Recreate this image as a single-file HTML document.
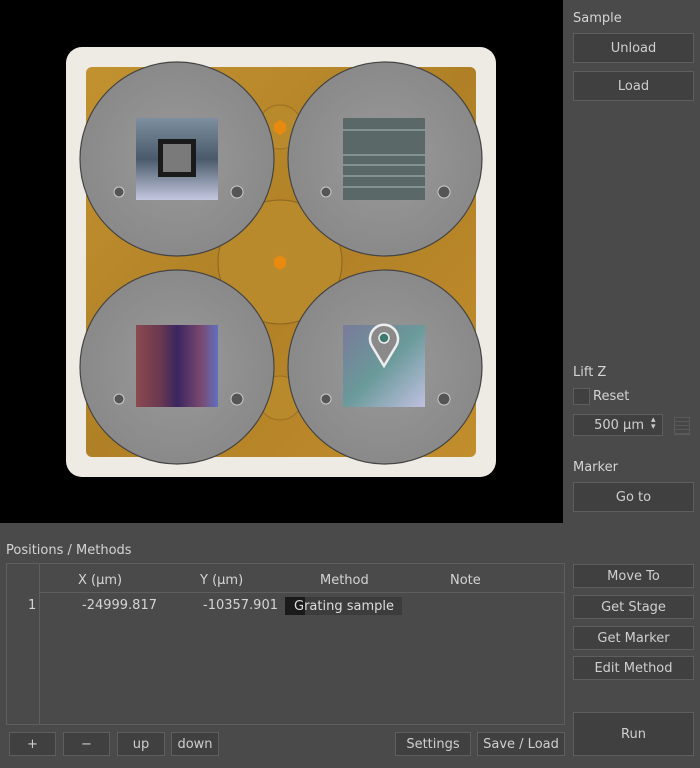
<!DOCTYPE html>
<html><head><style>
body{margin:0;width:700px;height:768px;background:#4a4a4a;font-family:"DejaVu Sans","Liberation Sans",sans-serif;color:#d2d2d2;font-size:13px;position:relative;overflow:hidden}
.a{position:absolute}
.btn{position:absolute;box-sizing:border-box;border:1px solid #5e5e5e;background:#404040;color:#cfcfcf;text-align:center;font-size:13px}
.lbl{position:absolute;font-size:13px;color:#d4d4d4}
</style></head><body>
<div class="a" style="left:0;top:0;width:563px;height:523px;background:#000"></div>
<svg class="a" style="left:0;top:0" width="563" height="523">
<defs>
<radialGradient id="g" cx="50%" cy="50%" r="60%"><stop offset="0" stop-color="#9a9a9a"/><stop offset="1" stop-color="#868686"/></radialGradient>
<linearGradient id="gold" x1="0" y1="0" x2="1" y2="1"><stop offset="0" stop-color="#c29230"/><stop offset=".5" stop-color="#b08026"/><stop offset="1" stop-color="#c28e2c"/></linearGradient>
<linearGradient id="s1" x1="0" y1="0" x2="0" y2="1"><stop offset="0" stop-color="#7d8fa0"/><stop offset=".5" stop-color="#4a5a6a"/><stop offset="1" stop-color="#c5c8e0"/></linearGradient>
<linearGradient id="s3" x1="0" y1="0" x2="1" y2="0"><stop offset="0" stop-color="#8a4a50"/><stop offset=".3" stop-color="#6a3850"/><stop offset=".5" stop-color="#3a2560"/><stop offset=".8" stop-color="#7a4a70"/><stop offset="1" stop-color="#6070c0"/></linearGradient>
<linearGradient id="s4" x1="0" y1="0" x2="1" y2="1"><stop offset="0" stop-color="#7a7a9a"/><stop offset=".5" stop-color="#6a9a9a"/><stop offset="1" stop-color="#c0c0e0"/></linearGradient>
</defs>
<rect x="66" y="47" width="430" height="430" rx="16" fill="#eeeae4"/>
<rect x="86" y="67" width="390" height="390" rx="6" fill="url(#gold)"/>
<circle cx="280" cy="262" r="62" fill="#b88a2c" stroke="#8a6420"/>
<circle cx="280" cy="127" r="22" fill="#b88a2c" stroke="#9a7024"/>
<circle cx="280" cy="398" r="22" fill="#b88a2c" stroke="#9a7024"/>
<polygon points="280,120 286,124 286,131 280,135 274,131 274,124" fill="#e88a10"/>
<polygon points="280,255 286,259 286,266 280,270 274,266 274,259" fill="#e88a10"/>
<g stroke="#444" stroke-width="1.2" fill="url(#g)">
<circle cx="177" cy="159" r="97"/><circle cx="385" cy="159" r="97"/>
<circle cx="177" cy="367" r="97"/><circle cx="385" cy="367" r="97"/>
</g>
<rect x="136" y="118" width="82" height="82" fill="url(#s1)"/>
<rect x="158" y="139" width="38" height="38" fill="#1a1a1a"/><rect x="163" y="144" width="28" height="28" fill="#7a7a7a"/>
<rect x="343" y="118" width="82" height="82" fill="#5a6868"/>
<g stroke="#8fa0a0" stroke-width="1.5"><line x1="343" y1="130" x2="425" y2="130"/><line x1="343" y1="155" x2="425" y2="155"/><line x1="343" y1="165" x2="425" y2="165"/><line x1="343" y1="176" x2="425" y2="176"/><line x1="343" y1="187" x2="425" y2="187"/></g>
<rect x="136" y="325" width="82" height="82" fill="url(#s3)"/>
<rect x="343" y="325" width="82" height="82" fill="url(#s4)"/>
<g fill="#555" stroke="#ccc" stroke-width="1">
<circle cx="119" cy="192" r="5"/><circle cx="237" cy="192" r="6"/><circle cx="326" cy="192" r="5"/><circle cx="444" cy="192" r="6"/>
<circle cx="119" cy="399" r="5"/><circle cx="237" cy="399" r="6"/><circle cx="326" cy="399" r="5"/><circle cx="444" cy="399" r="6"/>
</g>
<path d="M384,366 L372,346 A14,14 0 1,1 396,346 Z" fill="#8a8a8a" stroke="#eee" stroke-width="2.5"/>
<circle cx="384" cy="338" r="5" fill="#3f7a70" stroke="#eee" stroke-width="1.5"/>
</svg>
<div class="lbl" style="left:573px;top:11px">Sample</div>
<div class="btn" style="left:573px;top:33px;width:121px;height:30px;line-height:29px">Unload</div>
<div class="btn" style="left:573px;top:71px;width:121px;height:30px;line-height:29px">Load</div>
<div class="lbl" style="left:573px;top:365px">Lift Z</div>
<div class="a" style="left:573px;top:388px;width:17px;height:17px;border:1px solid #5e5e5e;background:#404040;box-sizing:border-box"></div>
<div class="lbl" style="left:593px;top:389px">Reset</div>
<div class="btn" style="left:573px;top:414px;width:90px;height:22px;line-height:21px;text-align:right;padding-right:18px">500 µm</div>
<div class="a" style="left:651px;top:417px;font-size:9px;line-height:7px;color:#ccc">▴<br>▾</div>
<div class="a" style="left:674px;top:417px;width:16px;height:18px;border:1px solid #5a5a5a;box-sizing:border-box;background:repeating-linear-gradient(#474747 0 3px,#5a5a5a 3px 4px)"></div>
<div class="lbl" style="left:573px;top:460px">Marker</div>
<div class="btn" style="left:573px;top:482px;width:121px;height:30px;line-height:29px">Go to</div>
<div class="lbl" style="left:6px;top:543px">Positions / Methods</div>
<div class="a" style="left:6px;top:563px;width:559px;height:162px;border:1px solid #5e5e5e;box-sizing:border-box"></div>
<div class="a" style="left:39px;top:564px;width:1px;height:160px;background:#5e5e5e"></div>
<div class="a" style="left:40px;top:592px;width:524px;height:1px;background:#5e5e5e"></div>
<div class="lbl" style="left:78px;top:573px">X (µm)</div>
<div class="lbl" style="left:200px;top:573px">Y (µm)</div>
<div class="lbl" style="left:320px;top:573px">Method</div>
<div class="lbl" style="left:450px;top:573px">Note</div>
<div class="lbl" style="left:28px;top:598px">1</div>
<div class="lbl" style="left:82px;top:598px">-24999.817</div>
<div class="lbl" style="left:203px;top:598px">-10357.901</div>
<div class="a" style="left:285px;top:597px;width:117px;height:18px;background:#3c3c3c"></div>
<div class="a" style="left:285px;top:597px;width:20px;height:18px;background:#1a1a1a"></div>
<div class="lbl" style="left:294px;top:599px;color:#ddd">Grating sample</div>
<div class="btn" style="left:573px;top:564px;width:121px;height:24px;line-height:23px">Move To</div>
<div class="btn" style="left:573px;top:595px;width:121px;height:24px;line-height:23px">Get Stage</div>
<div class="btn" style="left:573px;top:626px;width:121px;height:24px;line-height:23px">Get Marker</div>
<div class="btn" style="left:573px;top:656px;width:121px;height:24px;line-height:23px">Edit Method</div>
<div class="btn" style="left:573px;top:712px;width:121px;height:44px;line-height:43px">Run</div>
<div class="btn" style="left:9px;top:732px;width:47px;height:24px;line-height:23px">+</div>
<div class="btn" style="left:63px;top:732px;width:47px;height:24px;line-height:23px">−</div>
<div class="btn" style="left:117px;top:732px;width:48px;height:24px;line-height:23px">up</div>
<div class="btn" style="left:171px;top:732px;width:48px;height:24px;line-height:23px">down</div>
<div class="btn" style="left:395px;top:732px;width:76px;height:24px;line-height:23px">Settings</div>
<div class="btn" style="left:477px;top:732px;width:88px;height:24px;line-height:23px">Save / Load</div>
</body></html>
